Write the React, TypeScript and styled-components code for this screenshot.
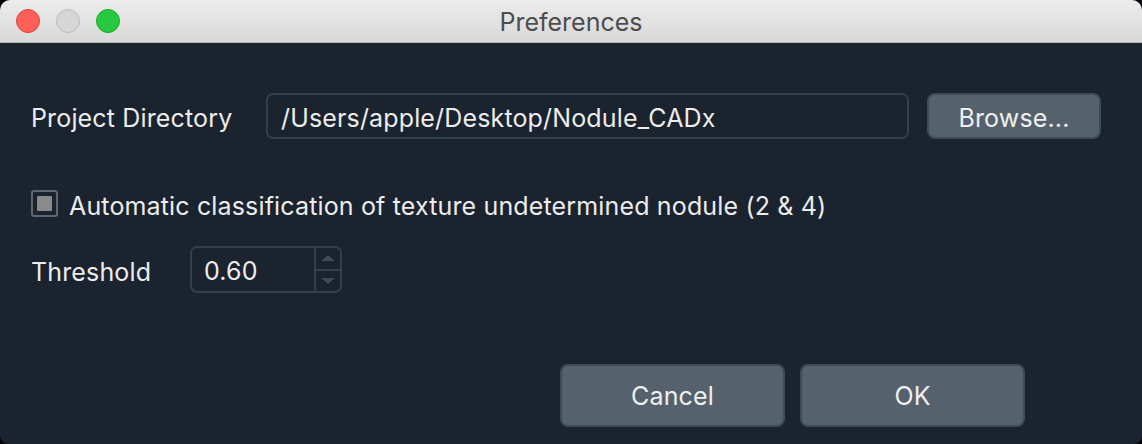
import React from "react";
import styled, { createGlobalStyle } from "styled-components";

const Global = createGlobalStyle`
  html, body { margin: 0; padding: 0; background: #000; }
  body { font-family: Inter, "Noto Sans", sans-serif; -webkit-font-smoothing: antialiased; }
  * { box-sizing: border-box; }
`;

const Window = styled.div`
  width: 1142px;
  height: 444px;
  border-radius: 10px 10px 8px 8px;
  overflow: hidden;
  background: #1a232e;
  display: flex;
  flex-direction: column;
`;

const TitleBar = styled.div`
  height: 43px;
  flex: none;
  background: linear-gradient(#ececec, #d8d8d8);
  border-bottom: 1px solid #b5b5b5;
  display: grid;
  grid-template-columns: 1fr auto 1fr;
  align-items: center;
`;

const Lights = styled.div`
  display: flex;
  gap: 16px;
  padding-left: 16px;
`;

const Light = styled.span<{ $fill: string; $ring: string }>`
  width: 24px;
  height: 24px;
  border-radius: 50%;
  background: ${(p) => p.$fill};
  border: 1px solid ${(p) => p.$ring};
`;

const Title = styled.div`
  font-size: 25px;
  color: #4d4d4d;
  padding-top: 1px;
`;

const Body = styled.div`
  flex: 1;
  display: flex;
  flex-direction: column;
  padding: 50px 41px 0 31px;
  color: #ececec;
  font-size: 25px;
  letter-spacing: 0.15px;
`;

const Row = styled.div<{ $mt?: number }>`
  display: flex;
  align-items: center;
  margin-top: ${(p) => p.$mt ?? 0}px;
`;

const Label = styled.span<{ $w?: number }>`
  ${(p) => (p.$w ? `width: ${p.$w}px; flex: none;` : "")}
  line-height: 22px;
  padding-top: 4px;
  white-space: nowrap;
`;

const TextField = styled.div`
  flex: 1;
  height: 46px;
  border: 2px solid #343f4a;
  border-radius: 7px;
  display: flex;
  align-items: center;
  padding: 3px 0 0 13px;
  margin-right: 18px;
`;

const Button = styled.button<{ $w: number; $h: number; $shift?: number }>`
  width: ${(p) => p.$w}px;
  height: ${(p) => p.$h}px;
  background: #55626d;
  border: 2px solid #3e4a55;
  border-radius: 8px;
  color: #efefef;
  font-family: inherit;
  font-size: 25px;
  letter-spacing: 0.15px;
  padding: ${(p) => p.$shift ?? 0}px 0 0;
`;

const CheckBox = styled.span`
  width: 27px;
  height: 27px;
  border: 2px solid #5e6670;
  border-radius: 3px;
  display: flex;
  align-items: center;
  justify-content: center;
  margin-right: 11px;
  flex: none;
  &::after {
    content: "";
    width: 15px;
    height: 15px;
    background: #8a8a8a;
    border-radius: 1px;
  }
`;

const Spin = styled.div`
  width: 152px;
  height: 47px;
  border: 2px solid #343f4a;
  border-radius: 7px;
  display: flex;
`;

const SpinValue = styled.div`
  flex: 1;
  display: flex;
  align-items: center;
  padding: 3px 0 0 12px;
  border-right: 2px solid #343f4a;
`;

const SpinArrows = styled.div`
  width: 24px;
  display: flex;
  flex-direction: column;
`;

const Arrow = styled.div<{ $down?: boolean }>`
  flex: 1;
  display: flex;
  align-items: center;
  justify-content: center;
  ${(p) => (p.$down ? "" : "border-bottom: 2px solid #343f4a;")}
  &::after {
    content: "";
    width: 0;
    height: 0;
    border-left: 7px solid transparent;
    border-right: 7px solid transparent;
    ${(p) => (p.$down ? "border-top: 6px solid #3f4a55;" : "border-bottom: 6px solid #3f4a55;")}
  }
`;

const Footer = styled.div`
  display: flex;
  justify-content: flex-end;
  gap: 15px;
  margin-top: 71px;
  padding-right: 76px;
`;

export default function App() {
  return (
    <>
      <Global />
      <Window>
        <TitleBar>
          <Lights>
            <Light $fill="#fe5f57" $ring="#e0443e" />
            <Light $fill="#d6d6d6" $ring="#bdbdbd" />
            <Light $fill="#28c840" $ring="#1aab29" />
          </Lights>
          <Title>Preferences</Title>
          <div />
        </TitleBar>
        <Body>
          <Row>
            <Label $w={235}>Project Directory</Label>
            <TextField>/Users/apple/Desktop/Nodule_CADx</TextField>
            <Button $w={174} $h={46} $shift={3}>Browse...</Button>
          </Row>
          <Row $mt={51}>
            <CheckBox />
            <Label>Automatic classification of texture undetermined nodule (2 &amp; 4)</Label>
          </Row>
          <Row $mt={29}>
            <Label $w={159}>Threshold</Label>
            <Spin>
              <SpinValue>0.60</SpinValue>
              <SpinArrows>
                <Arrow />
                <Arrow $down />
              </SpinArrows>
            </Spin>
          </Row>
          <Footer>
            <Button $w={225} $h={63}>Cancel</Button>
            <Button $w={225} $h={63}>OK</Button>
          </Footer>
        </Body>
      </Window>
    </>
  );
}
